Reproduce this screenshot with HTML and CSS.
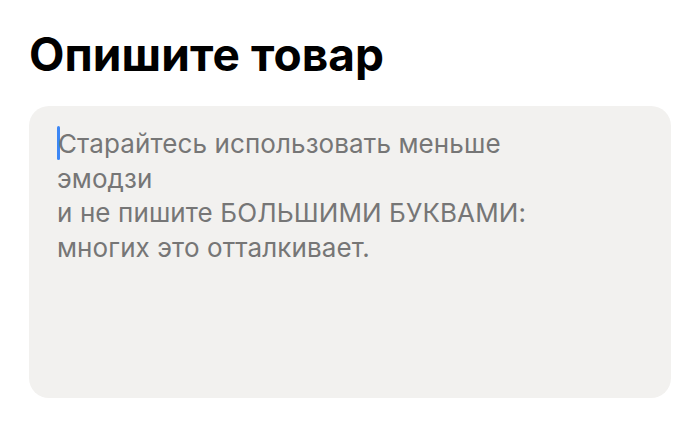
FILE: index.html
```html
<!DOCTYPE html>
<html lang="ru">
<head>
<meta charset="utf-8">
<link rel="stylesheet" href="styles.css">
</head>
<body>
<main class="page">
  <h1 class="title">Опишите товар</h1>
  <div class="field">
    <p class="placeholder"><span class="caret"></span>Старайтесь использовать меньше<br>эмодзи<br>и не пишите БОЛЬШИМИ БУКВАМИ:<br>многих это отталкивает.</p>
  </div>
</main>
</body>
</html>
```
FILE: styles.css
```css
html, body {
  margin: 0;
  padding: 0;
  background: #ffffff;
}
.page {
  padding: 26px 29px 0 29px;
  font-family: Inter, "Noto Sans", sans-serif;
}
.title {
  margin: 0;
  font-size: 46px;
  font-weight: 700;
  line-height: 56px;
  color: #000;
  letter-spacing: 0.1px;
}
.field {
  margin-top: 24px;
  height: 292px;
  box-sizing: border-box;
  background: #f2f1ef;
  border-radius: 20px;
  padding: 20px 28px;
}
.placeholder {
  margin: 0;
  font-size: 26px;
  line-height: 34.5px;
  letter-spacing: 0.1px;
  color: #767676;
}
.caret {
  display: inline-block;
  width: 3px;
  height: 34px;
  margin-right: -2px;
  vertical-align: -7px;
  background: #3d87f5;
  border-radius: 1.5px;
}
```
